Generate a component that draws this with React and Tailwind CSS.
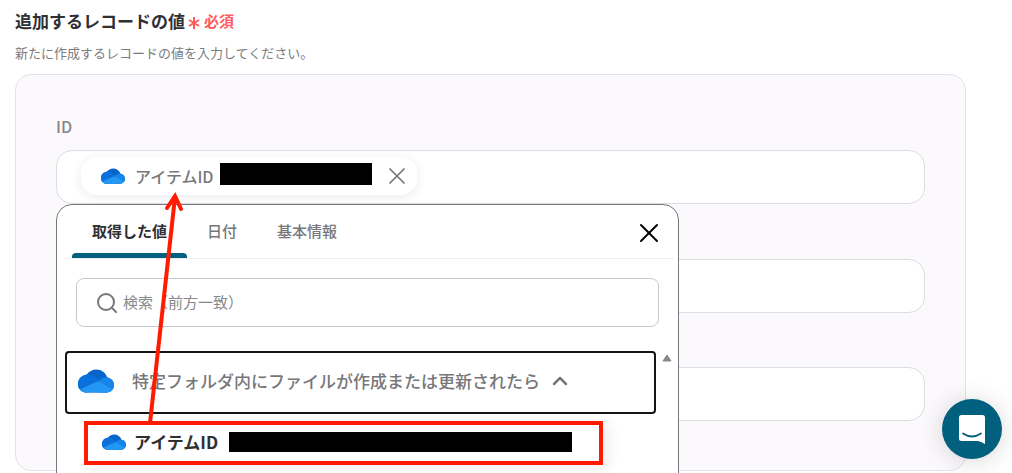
import { useState } from "react";
import { ChevronUp, Search, X } from "lucide-react";

const tabs = ["取得した値", "日付", "基本情報"];

function CloudLogo({ className, id }) {
  return (
    <svg viewBox="0 0 36 24" className={className} aria-hidden="true">
      <clipPath id={id}>
        <path d="M8 23.500C3.500 23.500 0 19.900 0 15C0 10 3.500 6.300 8.500 5.700C10.800 2.600 14.300.6 18.500.6C23.400.6 27.600 3.700 29.300 8.500C33.300 9.200 36 12.200 36 16.100C36 20.300 32.800 23.500 28.700 23.500Z" />
      </clipPath>
      <g clipPath={`url(#${id})`}>
        <rect width="36" height="24" fill="#0764c9" />
        <path d="M0 24V5H8.500C12 5.300 14.500 6.800 17 8.300L24 12.800L8 24Z" fill="#0b70dc" />
        <path d="M20.500 12.200C23.500 9.200 26.500 8.300 30 8H36V24H20Z" fill="#1784e8" />
        <path d="M1.500 20.800C8 17.500 14 14.500 20.500 12.200L34.500 20.500L32 24H4Z" fill="#2297f3" />
      </g>
    </svg>
  );
}

function ChatIcon() {
  return (
    <svg viewBox="0 0 28 32" className="h-8 w-7" aria-hidden="true">
      <path
        d="M3.500 2H24.500Q27 2 27 4.500V31Q24 29 20 28H3.500Q1 28 1 25.500V4.500Q1 2 3.500 2Z"
        fill="#fff"
      />
      <path
        d="M5 20.500Q14 26.500 23 20.500"
        fill="none"
        stroke="#02607f"
        strokeWidth="1.800"
        strokeLinecap="round"
      />
    </svg>
  );
}

function ValuePicker() {
  const [activeTab, setActiveTab] = useState(tabs[0]);

  return (
    <div className="absolute top-full left-0 z-10 w-full max-w-[623px] rounded-t-2xl border border-[#77777b] bg-white pb-10">
      <div className="mr-[5px] ml-2 flex h-[54px] items-stretch border-b border-[#efeff1] pl-[7px]">
        {tabs.map((tab) => (
          <button
            key={tab}
            type="button"
            onClick={() => setActiveTab(tab)}
            className={`relative px-5 text-[15px] ${
              activeTab === tab ? "font-bold text-[#303033]" : "font-medium text-[#77777a]"
            }`}
          >
            {tab}
            {activeTab === tab && (
              <span className="absolute bottom-0 left-0 h-[5px] w-full rounded-t bg-[#02607f]" />
            )}
          </button>
        ))}
        <button type="button" aria-label="閉じる" className="mr-2 ml-auto pt-[3px] text-black">
          <X size={32} strokeWidth={1.5} />
        </button>
      </div>

      <div className="mx-[19px] mt-[19px] flex h-[49px] items-center gap-1 rounded-lg border border-[#cbc9ce] pl-[18px]">
        <Search size={24} className="shrink-0 text-[#77777a]" />
        <input
          type="text"
          aria-label="検索"
          placeholder="検索（前方一致）"
          className="w-full text-[15px] text-[#77777a] outline-none placeholder:text-[#88888b]"
        />
      </div>

      <div className="mt-6 flex items-start gap-[6px] pr-[6px] pl-2">
        <button
          type="button"
          aria-expanded="true"
          className="flex h-[63px] grow items-center rounded border-2 border-[#151518] pb-[3px] pl-[11px] text-[17px] font-medium text-[#77777a]"
        >
          <CloudLogo id="cloud-group" className="mr-[18px] h-6 w-9" />
          特定フォルダ内にファイルが作成または更新されたら
          <ChevronUp size={24} strokeWidth={2.5} className="ml-2" />
        </button>
        <svg viewBox="0 0 10 8" className="mt-[3px] h-2 w-[10px]" aria-hidden="true">
          <path d="M5 1L9 7H1Z" fill="#87878a" stroke="#87878a" strokeLinejoin="round" />
        </svg>
      </div>

      <button
        type="button"
        className="mt-[7px] ml-[27px] flex h-11 w-[519px] max-w-full items-center border-4 border-[#ff1a00] pb-[3px] pl-[14px] text-[17px] font-bold text-[#303033] shadow-[6px_2px_12px_rgba(60,40,80,0.08)]"
      >
        <CloudLogo id="cloud-item" className="mr-2 h-4 w-6" />
        アイテムID
        <span className="ml-[11px] h-5 w-[343px] bg-black" />
      </button>

      {/* arrow from the list item up to the selected value */}
      <svg
        viewBox="0 0 40 232"
        className="pointer-events-none absolute -top-[14px] left-[87px] h-[232px] w-10"
        fill="none"
        stroke="#ff1a00"
        strokeWidth="4"
        aria-hidden="true"
      >
        <path d="M6 232L31 6" />
        <path d="M23 17L31 5L37 18" strokeLinecap="round" />
      </svg>
    </div>
  );
}

export default function App() {
  const [selected, setSelected] = useState(true);

  const fieldStyle =
    "flex h-[54px] w-full items-center rounded-2xl border border-[#dcdce3] bg-white";

  return (
    <main
      lang="ja"
      className="h-screen overflow-hidden bg-white pt-[7px] pr-[46px] pl-[15px] font-['Noto_Sans_CJK_JP',sans-serif]"
    >
      <h2 className="flex items-center text-[17px] leading-7 font-bold text-[#303033]">
        追加するレコードの値
        <span className="ml-[3px] flex items-center gap-1 text-[15px] text-[#ff5a5c]">
          <svg
            viewBox="0 0 12 12"
            className="mt-1 size-3"
            stroke="currentColor"
            strokeWidth="2"
            aria-hidden="true"
          >
            <path d="M6 0V12M1 3L11 9M11 3L1 9" />
          </svg>
          必須
        </span>
      </h2>
      <p className="mt-2 text-[13px] leading-5 text-[#7b7b7e]">
        新たに作成するレコードの値を入力してください。
      </p>

      <section className="mt-[11px] rounded-2xl border border-[#e3e2e8] bg-[#fbf9fc] px-10 pt-[39px] pb-[49px]">
        <label
          htmlFor="record-id"
          className="mb-3 block text-base leading-6 font-medium text-[#858588]"
        >
          ID
        </label>
        <div className="relative">
          <div className={`${fieldStyle} pr-4 pb-[3px] pl-6`}>
            {selected && (
              <span className="flex h-[38px] shrink-0 items-center rounded-2xl bg-white pr-[6px] pl-5 text-base font-medium text-[#77777a] shadow-[0_2px_10px_rgba(60,40,80,0.1)]">
                <CloudLogo id="cloud-chip" className="mr-[10px] h-4 w-6" />
                アイテムID
                <span className="mb-1 ml-[6px] h-[22px] w-[152px] bg-black" />
                <button
                  type="button"
                  aria-label="削除"
                  onClick={() => setSelected(false)}
                  className="ml-[11px]"
                >
                  <X size={28} strokeWidth={1.5} />
                </button>
              </span>
            )}
            <input id="record-id" type="text" className="w-full pl-3 outline-none" />
          </div>
          <ValuePicker />
        </div>
        <input type="text" aria-label="値2" className={`${fieldStyle} mt-[55px] px-6`} />
        <input type="text" aria-label="値3" className={`${fieldStyle} mt-[54px] px-6`} />
      </section>

      <button
        type="button"
        aria-label="チャットを開く"
        className="fixed right-[10px] bottom-[14px] z-20 flex size-[60px] items-center justify-center rounded-full bg-[#02607f] shadow-[0_2px_24px_rgba(0,0,0,0.16)]"
      >
        <ChatIcon />
      </button>
    </main>
  );
}
